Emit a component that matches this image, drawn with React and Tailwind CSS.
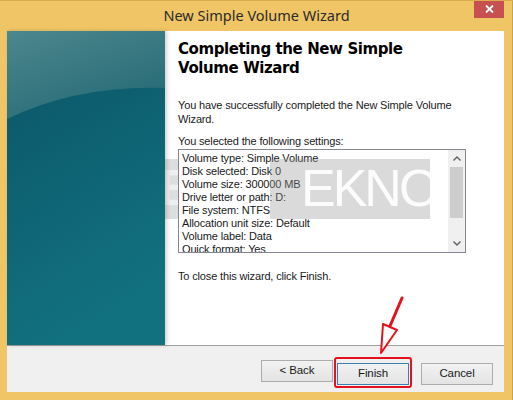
import React from "react";

const settings = [
  "Volume type: Simple Volume",
  "Disk selected: Disk 0",
  "Volume size: 300000 MB",
  "Drive letter or path: D:",
  "File system: NTFS",
  "Allocation unit size: Default",
  "Volume label: Data",
  "Quick format: Yes",
];

const TealPanel = () => (
  <div className="relative w-[158px] shrink-0 shadow-[2px_0_4px_rgba(0,0,0,0.18)] z-10">
    <svg className="block w-full h-full" viewBox="0 0 158 314" preserveAspectRatio="none">
      <defs>
        <linearGradient id="bodyGrad" x1="0" y1="0" x2="0.3" y2="1">
          <stop offset="0" stopColor="#0a5466" />
          <stop offset="1" stopColor="#12717f" />
        </linearGradient>
        <linearGradient id="topGrad" x1="0" y1="0" x2="0.6" y2="1">
          <stop offset="0" stopColor="#4c878e" />
          <stop offset="1" stopColor="#276b76" />
        </linearGradient>
      </defs>
      <rect x="0" y="0" width="158" height="314" fill="url(#bodyGrad)" />
      <path d="M0 0 H158 V57 Q70 54 0 88 Z" fill="url(#topGrad)" />
    </svg>
  </div>
);

const Button = ({ children, focused }) => (
  <button
    className={`w-[72px] h-[22px] text-[11.5px] tracking-[-0.1px] text-[#1a1a1a] border bg-gradient-to-b from-[#f2f2f2] to-[#e3e3e3] ${
      focused ? "border-[#3c7fb1]" : "border-[#acacac]"
    }`}
  >
    {children}
  </button>
);

export default function App() {
  return (
    <div
      className="relative w-[513px] h-[400px] bg-[#efc566] flex flex-col overflow-hidden border-t border-[#d9ad4e]"
      style={{ fontFamily: '"Liberation Sans", Arial, sans-serif' }}
    >
      {/* title bar */}
      <div className="relative h-[30px] flex items-center justify-center">
        <span
          className="text-[14.5px] text-[#2b2b2b] pb-[1px]"
          style={{ fontFamily: '"Noto Sans", "Open Sans", sans-serif' }}
        >
          New Simple Volume Wizard
        </span>
        <div className="absolute right-[9px] -top-[1px] w-[30px] h-[18px] bg-[#c75050] flex items-center justify-center">
          <svg width="9" height="8" viewBox="0 0 9 8">
            <path d="M1 0.5 L8 7.5 M8 0.5 L1 7.5" stroke="#ffffff" strokeWidth="1.8" />
          </svg>
        </div>
      </div>

      {/* client area */}
      <div className="flex-1 ml-[7px] mr-[9px] mb-[8px] bg-white flex flex-col">
        <div className="flex h-[314px]">
          <TealPanel />
          <div className="flex-1 pl-[13px] pt-[9px] text-[11px] tracking-[-0.15px] leading-[14px] text-[#1a1a1a]">
            <h1
              className="text-[15px] leading-[19px] tracking-[-0.4px] font-bold text-black"
              style={{ fontFamily: '"DejaVu Sans", Verdana, sans-serif' }}
            >
              Completing the New Simple
              <br />
              Volume Wizard
            </h1>
            <p className="mt-[20px]">
              You have successfully completed the New Simple Volume
              <br />
              Wizard.
            </p>
            <p className="mt-[8px]">You selected the following settings:</p>
            <div className="mt-[1px] w-[288px] h-[104px] border border-[#828790] flex">
              <div className="flex-1 pl-[3px] pt-[2px] overflow-hidden leading-[13px]">
                {settings.map((s) => (
                  <div key={s} className="whitespace-nowrap">
                    {s}
                  </div>
                ))}
              </div>
              <div className="w-[17px] bg-[#f0f0f0] flex flex-col items-center">
                <div className="h-[17px] flex items-center justify-center">
                  <svg width="8" height="5" viewBox="0 0 8 5">
                    <path d="M0.5 4.5 L4 1 L7.5 4.5" fill="none" stroke="#606060" strokeWidth="1.4" />
                  </svg>
                </div>
                <div className="w-[13px] h-[51px] bg-[#cdcdcd]" />
                <div className="flex-1" />
                <div className="h-[17px] flex items-center justify-center">
                  <svg width="8" height="5" viewBox="0 0 8 5">
                    <path d="M0.5 0.5 L4 4 L7.5 0.5" fill="none" stroke="#606060" strokeWidth="1.4" />
                  </svg>
                </div>
              </div>
            </div>
            <p className="mt-[16px]">To close this wizard, click Finish.</p>
          </div>
        </div>

        {/* footer */}
        <div className="flex-1 bg-[#f0f0f0] border-t border-[#a0a0a0] flex justify-end items-start pt-[14px] pr-[11px]">
          <Button>&lt; Back</Button>
          <div className="relative ml-[4px]">
            <Button focused>Finish</Button>
            <div className="absolute -inset-[3px] border-2 border-[#e3121c] rounded-[3px]" />
          </div>
          <div className="ml-[12px]">
            <Button>Cancel</Button>
          </div>
        </div>
      </div>

      {/* watermark */}
      <div className="absolute left-[157px] top-[158px] w-[21px] h-[60px] bg-[rgba(160,160,160,0.35)] overflow-hidden">
        <span className="absolute left-[2px] top-[4px] text-[50px] leading-[50px] font-bold text-[rgba(255,255,255,0.5)]">
          B
        </span>
      </div>
      <div className="absolute left-[270px] top-[158px] w-[160px] h-[60px] bg-[rgba(150,150,150,0.35)] overflow-hidden">
        <span className="absolute left-[31px] top-[3px] text-[52px] leading-[52px] tracking-[-3px] text-[rgba(255,255,255,0.92)]">
          EKNO
        </span>
      </div>

      {/* red arrow */}
      <svg className="absolute left-0 top-0 pointer-events-none" width="513" height="400">
        <path d="M402 297 L390 325" stroke="#e3121c" strokeWidth="3" strokeLinecap="round" />
        <path d="M383 323 L397 329 L381 352 Z" fill="#ffffff" stroke="#e3121c" strokeWidth="2" strokeLinejoin="round" />
      </svg>
      <div className="absolute right-0 top-0 bottom-0 w-[1px] bg-[#c9a24c]" />
    </div>
  );
}
